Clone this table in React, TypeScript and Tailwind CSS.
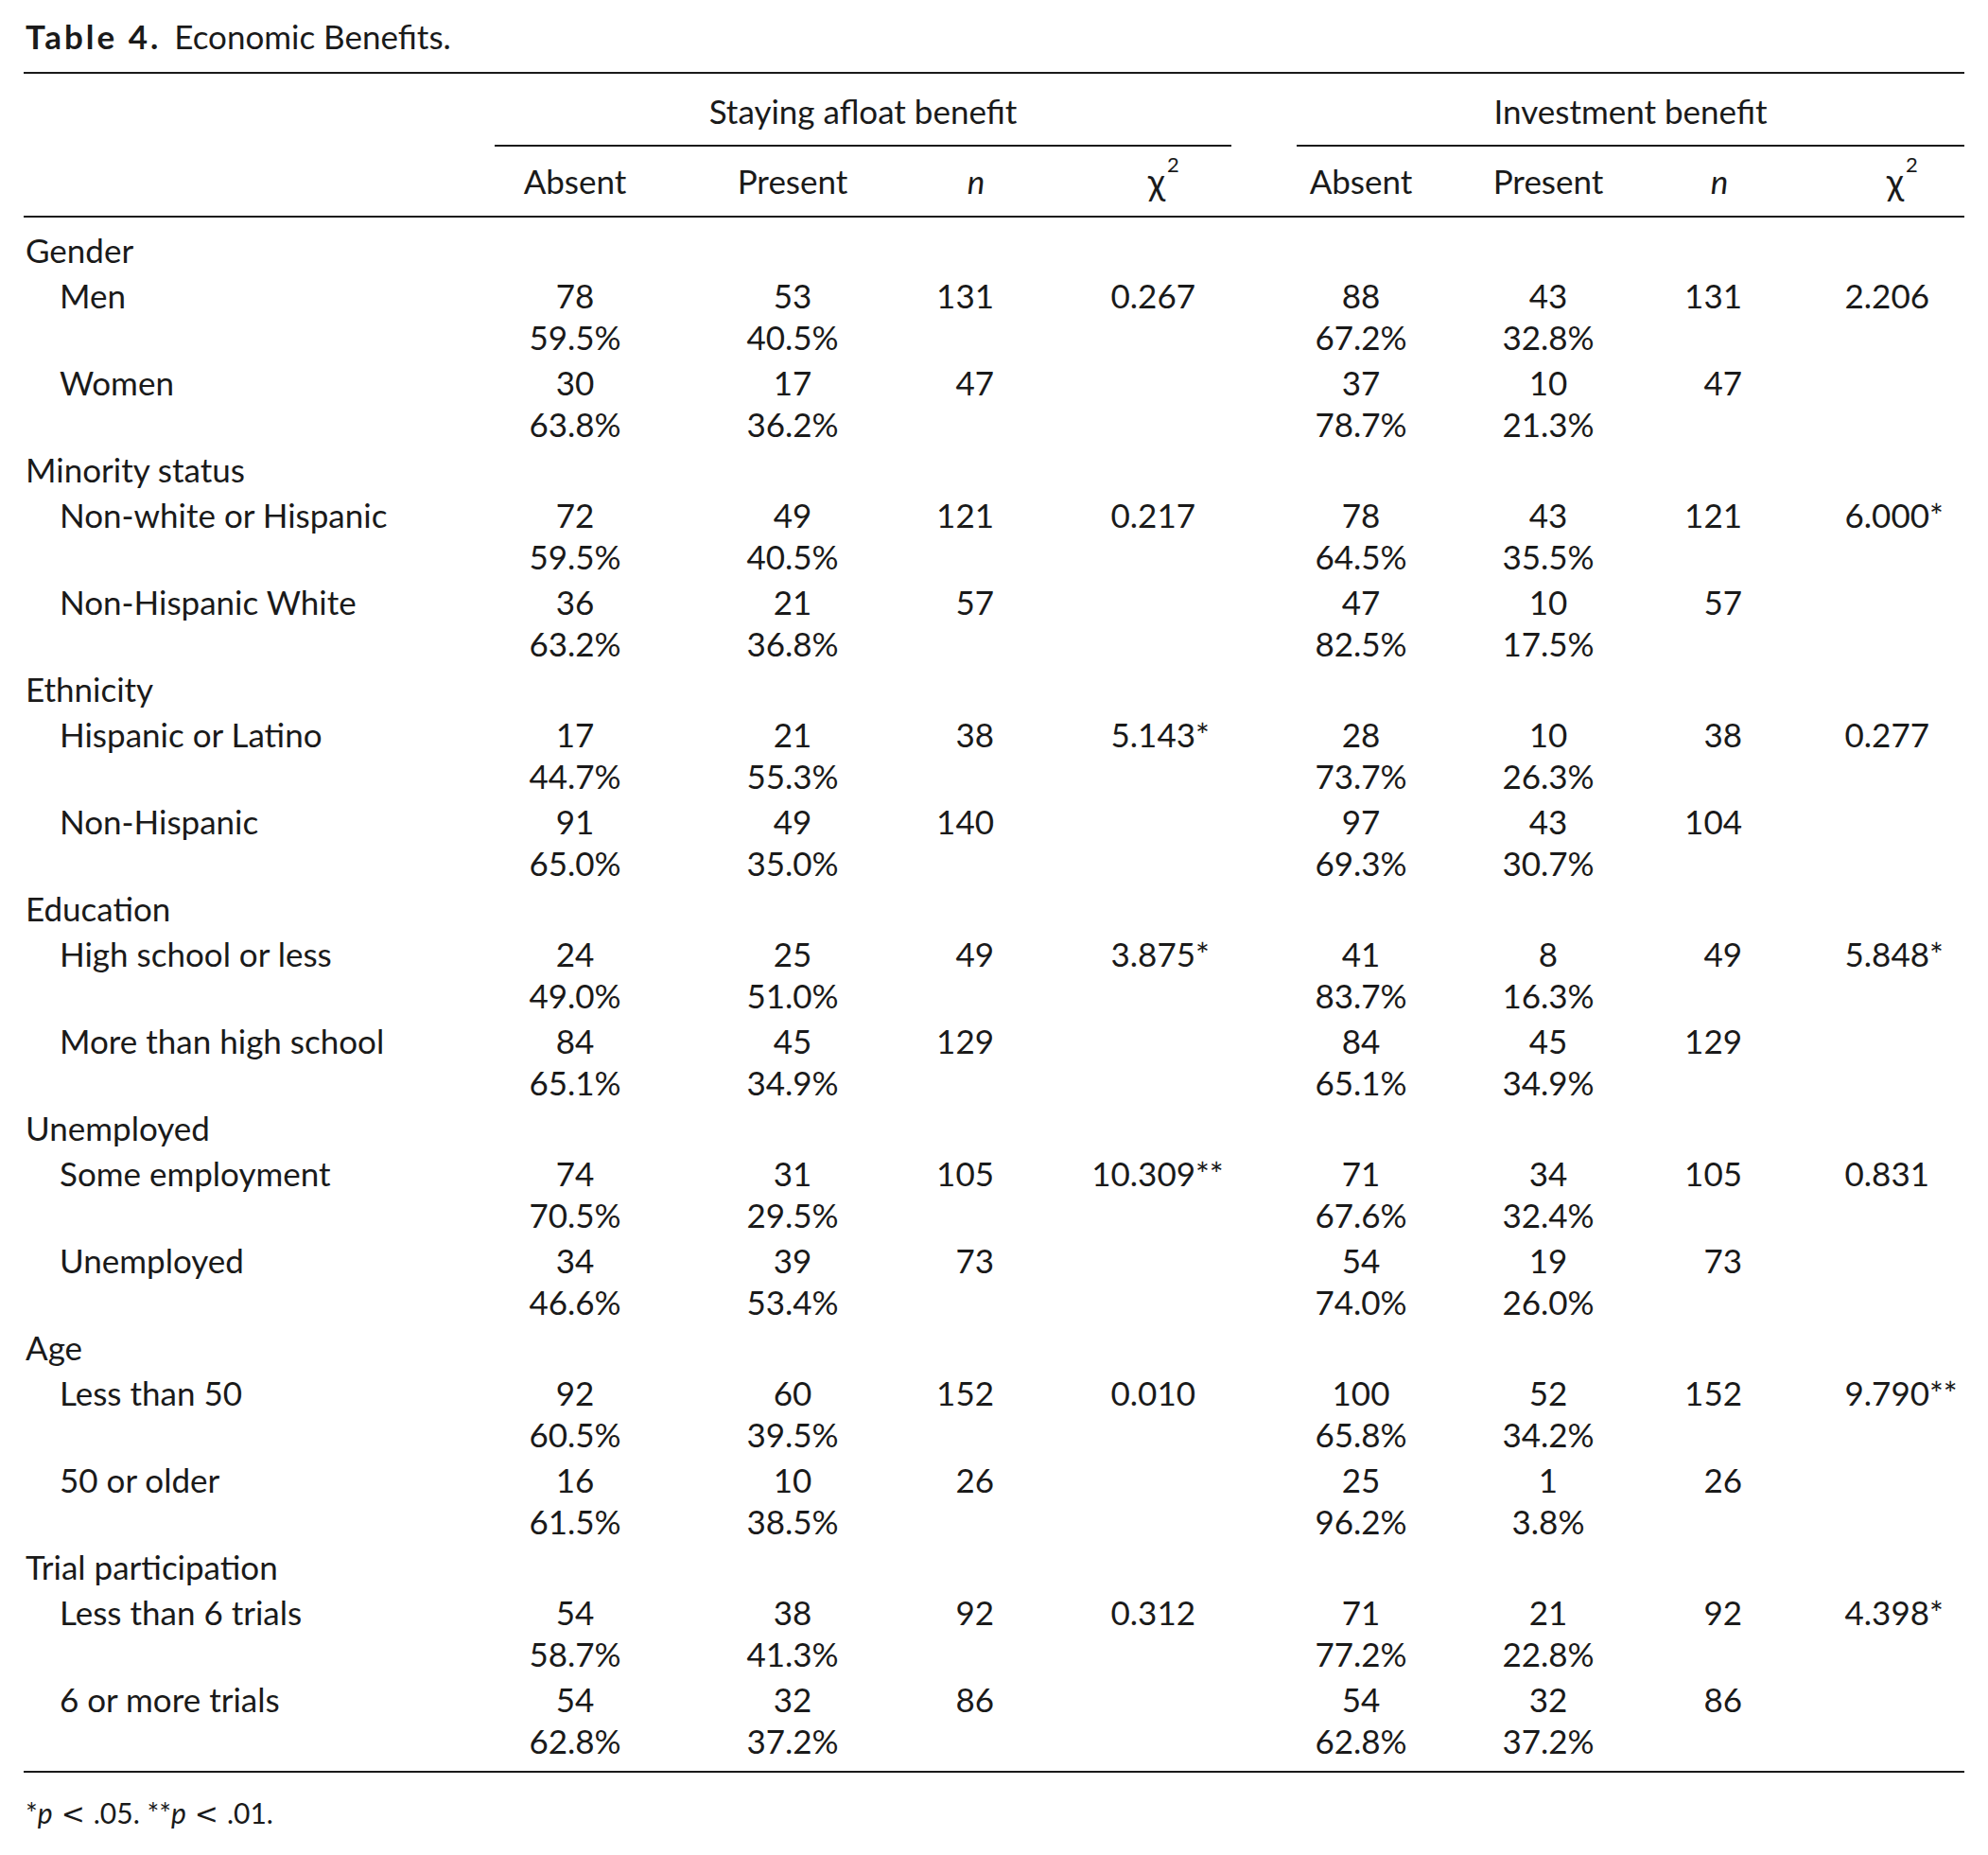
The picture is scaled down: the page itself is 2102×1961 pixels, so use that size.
import React from 'react';

interface Cell {
  count: string;
  pct: string;
}

interface Half {
  absent: Cell;
  present: Cell;
  n: string;
  chi?: string;
  stars?: string;
}

interface Item {
  label: string;
  afloat: Half;
  invest: Half;
}

interface Group {
  title: string;
  items: Item[];
}

const c = (count: string, pct: string): Cell => ({ count, pct });

const groups: Group[] = [
  {
    title: 'Gender',
    items: [
      {
        label: 'Men',
        afloat: { absent: c('78', '59.5%'), present: c('53', '40.5%'), n: '131', chi: '0.267' },
        invest: { absent: c('88', '67.2%'), present: c('43', '32.8%'), n: '131', chi: '2.206' },
      },
      {
        label: 'Women',
        afloat: { absent: c('30', '63.8%'), present: c('17', '36.2%'), n: '47' },
        invest: { absent: c('37', '78.7%'), present: c('10', '21.3%'), n: '47' },
      },
    ],
  },
  {
    title: 'Minority status',
    items: [
      {
        label: 'Non-white or Hispanic',
        afloat: { absent: c('72', '59.5%'), present: c('49', '40.5%'), n: '121', chi: '0.217' },
        invest: { absent: c('78', '64.5%'), present: c('43', '35.5%'), n: '121', chi: '6.000', stars: '*' },
      },
      {
        label: 'Non-Hispanic White',
        afloat: { absent: c('36', '63.2%'), present: c('21', '36.8%'), n: '57' },
        invest: { absent: c('47', '82.5%'), present: c('10', '17.5%'), n: '57' },
      },
    ],
  },
  {
    title: 'Ethnicity',
    items: [
      {
        label: 'Hispanic or Latino',
        afloat: { absent: c('17', '44.7%'), present: c('21', '55.3%'), n: '38', chi: '5.143', stars: '*' },
        invest: { absent: c('28', '73.7%'), present: c('10', '26.3%'), n: '38', chi: '0.277' },
      },
      {
        label: 'Non-Hispanic',
        afloat: { absent: c('91', '65.0%'), present: c('49', '35.0%'), n: '140' },
        invest: { absent: c('97', '69.3%'), present: c('43', '30.7%'), n: '104' },
      },
    ],
  },
  {
    title: 'Education',
    items: [
      {
        label: 'High school or less',
        afloat: { absent: c('24', '49.0%'), present: c('25', '51.0%'), n: '49', chi: '3.875', stars: '*' },
        invest: { absent: c('41', '83.7%'), present: c('8', '16.3%'), n: '49', chi: '5.848', stars: '*' },
      },
      {
        label: 'More than high school',
        afloat: { absent: c('84', '65.1%'), present: c('45', '34.9%'), n: '129' },
        invest: { absent: c('84', '65.1%'), present: c('45', '34.9%'), n: '129' },
      },
    ],
  },
  {
    title: 'Unemployed',
    items: [
      {
        label: 'Some employment',
        afloat: { absent: c('74', '70.5%'), present: c('31', '29.5%'), n: '105', chi: '10.309', stars: '**' },
        invest: { absent: c('71', '67.6%'), present: c('34', '32.4%'), n: '105', chi: '0.831' },
      },
      {
        label: 'Unemployed',
        afloat: { absent: c('34', '46.6%'), present: c('39', '53.4%'), n: '73' },
        invest: { absent: c('54', '74.0%'), present: c('19', '26.0%'), n: '73' },
      },
    ],
  },
  {
    title: 'Age',
    items: [
      {
        label: 'Less than 50',
        afloat: { absent: c('92', '60.5%'), present: c('60', '39.5%'), n: '152', chi: '0.010' },
        invest: { absent: c('100', '65.8%'), present: c('52', '34.2%'), n: '152', chi: '9.790', stars: '**' },
      },
      {
        label: '50 or older',
        afloat: { absent: c('16', '61.5%'), present: c('10', '38.5%'), n: '26' },
        invest: { absent: c('25', '96.2%'), present: c('1', '3.8%'), n: '26' },
      },
    ],
  },
  {
    title: 'Trial participation',
    items: [
      {
        label: 'Less than 6 trials',
        afloat: { absent: c('54', '58.7%'), present: c('38', '41.3%'), n: '92', chi: '0.312' },
        invest: { absent: c('71', '77.2%'), present: c('21', '22.8%'), n: '92', chi: '4.398', stars: '*' },
      },
      {
        label: '6 or more trials',
        afloat: { absent: c('54', '62.8%'), present: c('32', '37.2%'), n: '86' },
        invest: { absent: c('54', '62.8%'), present: c('32', '37.2%'), n: '86' },
      },
    ],
  },
];

// column widths follow the printed table: label | 4 cols | gap | 4 cols
const grid = 'grid grid-cols-[498px_170px_290px_98px_221px_69px_136px_260px_102px_208px]';

const Chi: React.FC = () => (
  <span className="relative inline-block">
    <span className="text-[38px]">χ</span>
    <span className="absolute left-full -top-[6px] ml-[2px] text-[22px] leading-[22px]">2</span>
  </span>
);

const Pair: React.FC<{ cell: Cell }> = ({ cell }) => (
  <div className="text-center">
    <div>{cell.count}</div>
    <div>{cell.pct}</div>
  </div>
);

const ChiValue: React.FC<{ value?: string; stars?: string; pad: string }> = ({ value, stars, pad }) => (
  <div className={`flex justify-end ${pad}`}>
    {value && (
      <span className="relative">
        {value}
        {stars && <span className="absolute left-full top-0">{stars}</span>}
      </span>
    )}
  </div>
);

const Lt: React.FC = () => (
  <span className="mx-[9px] text-[30px] font-[family-name:'DejaVu_Sans',sans-serif]">&lt;</span>
);

const App: React.FC = () => {
  return (
    <div className="min-h-screen bg-white px-[25px] pt-[16px] text-[35px] leading-[44px] text-[#1a1a1a] font-[family-name:Lato,sans-serif]">
      <h1 className="pl-[2px]">
        <span className="font-bold tracking-[3px]">Table 4.</span>
        <span className="ml-[14px]">Economic Benefits.</span>
      </h1>

      <div className="mt-[16px] border-t-2 border-[#1a1a1a]" />

      <div className={`${grid} mt-[17px]`}>
        <div className="col-start-2 col-span-4 text-center">Staying afloat benefit</div>
        <div className="col-start-7 col-span-4 text-center">Investment benefit</div>
      </div>
      <div className={`${grid} mt-[14px]`}>
        <div className="col-start-2 col-span-4 border-t-2 border-[#1a1a1a]" />
        <div className="col-start-7 col-span-4 border-t-2 border-[#1a1a1a]" />
      </div>

      <div className={`${grid} mt-[14px]`}>
        <div />
        <div className="text-center">Absent</div>
        <div className="text-center">Present</div>
        <div className="text-center italic">n</div>
        <div className="text-right pr-[70px]"><Chi /></div>
        <div />
        <div className="text-center">Absent</div>
        <div className="text-center">Present</div>
        <div className="text-center italic">n</div>
        <div className="text-right pr-[64px]"><Chi /></div>
      </div>

      <div className="mt-[14px] border-t-2 border-[#1a1a1a]" />

      <div className="pt-[8px] pb-[10px]">
        {groups.map((g) => (
          <div key={g.title}>
            <div className="pt-[4px] pl-[2px]">{g.title}</div>
            {g.items.map((it) => (
              <div key={it.label} className={`${grid} pt-[4px]`}>
                <div className="pl-[38px]">{it.label}</div>
                <Pair cell={it.afloat.absent} />
                <Pair cell={it.afloat.present} />
                <div className="text-right pr-[30px]">{it.afloat.n}</div>
                <ChiValue value={it.afloat.chi} stars={it.afloat.stars} pad="pr-[38px]" />
                <div />
                <Pair cell={it.invest.absent} />
                <Pair cell={it.invest.present} />
                <div className="text-right pr-[27px]">{it.invest.n}</div>
                <ChiValue value={it.invest.chi} stars={it.invest.stars} pad="pr-[37px]" />
              </div>
            ))}
          </div>
        ))}
      </div>

      <div className="border-t-2 border-[#1a1a1a]" />

      <p className="mt-[24px] pl-[2px] text-[30px] leading-[36px]">
        *<span className="italic">p</span>
        <Lt />
        .05. **<span className="italic">p</span>
        <Lt />
        .01.
      </p>
    </div>
  );
};

export default App;
